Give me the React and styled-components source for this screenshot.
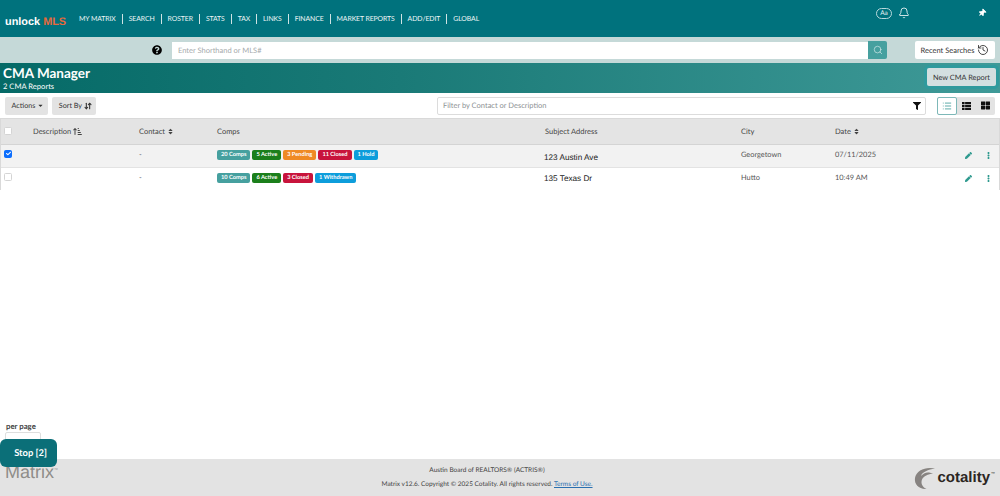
import React from 'react';
import styled, {createGlobalStyle} from 'styled-components';
import {FaQuestionCircle, FaFilter, FaPen, FaEllipsisV, FaThLarge, FaThumbtack, FaSort, FaCheck, FaCaretDown} from 'react-icons/fa';
import {FaArrowUpShortWide} from 'react-icons/fa6';
import {ArrowDownUp, Bell, History, List, Search} from 'lucide-react';

const GlobalStyle = createGlobalStyle`
    html, body {
        margin: 0;
        padding: 0;
        background: #fff;
        font-family: "Lato", "Open Sans", "Liberation Sans", sans-serif;
        text-rendering: geometricPrecision;
    }
    * {
        box-sizing: border-box;
    }
`;

const Page = styled.div`
    position: relative;
    display: flex;
    flex-direction: column;
    width: 1000px;
    height: 496px;
    overflow: hidden;
`;

const Nav = styled.div`
    height: 37px;
    flex: none;
    display: flex;
    align-items: center;
    padding: 0 14px 0 5px;
    background: #00727d;
    color: #fff;
`;
const Logo = styled.div`
    width: 74px;
    flex: none;
    font-family: "Liberation Sans", sans-serif;
    font-size: 10.9px;
    font-weight: 700;
    white-space: nowrap;
    padding-top: 6px;
    span {
        color: #e8693a;
    }
`;
const Menu = styled.div`
    display: flex;
    align-items: center;
    flex: 1;
`;
const MenuItem = styled.a`
    font-size: 6.9px;
    letter-spacing: -0.1px;
    line-height: 10px;
    color: #eef6f6;
    white-space: nowrap;
    padding: 0 6px;
    border-left: 1px solid #cfe3e4;
    &:first-child {
        border-left: none;
        padding-left: 0;
    }
`;
const NavIcons = styled.div`
    display: flex;
    align-items: center;
    margin-top: -11px;
`;
const FontPill = styled.div`
    width: 16px;
    height: 11px;
    border: 1px solid #b9d9dc;
    border-radius: 6px;
    font-size: 6.5px;
    line-height: 9px;
    text-align: center;
    color: #e5f1f2;
    margin-right: 6px;
`;
const PinWrap = styled.div`
    display: flex;
    margin-left: 68px;
    transform: rotate(45deg);
`;

const SearchBand = styled.div`
    height: 26px;
    flex: none;
    display: flex;
    align-items: center;
    padding: 0 5px 0 152px;
    background: #c5d9d8;
`;
const HelpIcon = styled(FaQuestionCircle)`
    width: 10px;
    height: 10px;
    color: #000;
    margin-right: 10px;
`;
const SearchBox = styled.div`
    width: 696px;
    height: 17px;
    display: flex;
    align-items: center;
    padding-left: 6px;
    background: #fff;
    font-size: 7.5px;
    color: #a5a9ab;
`;
const SearchButton = styled.div`
    width: 19px;
    height: 18px;
    display: flex;
    align-items: center;
    justify-content: center;
    background: #46a09f;
    border-radius: 0 2px 2px 0;
    color: #d8ecec;
`;
const RecentButton = styled.div`
    width: 80px;
    height: 18px;
    margin-left: 28px;
    display: flex;
    align-items: center;
    justify-content: center;
    gap: 3px;
    background: #fff;
    border-radius: 2px;
    font-size: 7.5px;
    color: #333;
    white-space: nowrap;
`;

const Banner = styled.div`
    height: 30px;
    flex: none;
    display: flex;
    align-items: center;
    justify-content: space-between;
    padding: 0 4px 0 3px;
    background: linear-gradient(90deg, #056a67 0%, #1a7a77 40%, #3f9a98 100%);
    color: #fff;
`;
const BannerTitle = styled.div`
    font-size: 13.5px;
    font-weight: 700;
    line-height: 16px;
`;
const BannerSub = styled.div`
    font-size: 7.6px;
    line-height: 10px;
`;
const NewButton = styled.div`
    height: 18px;
    margin-top: -2px;
    padding: 0 6px;
    display: flex;
    align-items: center;
    background: #d3dfe0;
    border-radius: 2px;
    box-shadow: 0 0 0 3px #2f9a9d;
    font-size: 7.35px;
    color: #333;
`;

const Toolbar = styled.div`
    height: 25px;
    flex: none;
    display: flex;
    align-items: center;
    padding: 0 5px;
`;
const ToolButton = styled.div`
    height: 18px;
    display: flex;
    align-items: center;
    gap: 2px;
    padding: 0 4px 0 6.5px;
    margin-right: 4px;
    background: #e3e3e3;
    border-radius: 2px;
    font-size: 7.2px;
    color: #333;
`;
const FilterBox = styled.div`
    width: 489px;
    height: 18px;
    margin-left: auto;
    display: flex;
    align-items: center;
    justify-content: space-between;
    padding: 0 4px 0 5px;
    border: 1px solid #dcdcdc;
    border-radius: 2px;
    font-size: 7.5px;
    color: #8d9194;
`;
const ViewGroup = styled.div`
    display: flex;
    height: 18px;
    margin-left: 11px;
    background: #e3e3e3;
    border-radius: 2px;
`;
const ViewButton = styled.div`
    width: ${props => props.$active ? 20 : 19}px;
    display: flex;
    align-items: center;
    justify-content: center;
    color: ${props => props.$active ? '#3d9a98' : '#111'};
    background: ${props => props.$active ? '#fff' : 'transparent'};
    border: ${props => props.$active ? '1px solid #7db8b8' : 'none'};
    border-radius: 2px;
`;

const Table = styled.div`
    flex: none;
    height: 72px;
    border: 1px solid #d9d9d9;
`;
const Row = styled.div`
    display: grid;
    grid-template-columns: 32px 106px 78px 328px 196px 94px 90px 1fr;
    align-items: center;
    height: ${props => props.$height}px;
    background: ${props => props.$bg};
    border-bottom: ${props => props.$line ? `1px solid ${props.$line}` : 'none'};
    font-size: 7.4px;
    color: #555;
`;
const HeadCell = styled.div`
    display: flex;
    align-items: center;
    gap: 2px;
    color: #444;
    font-size: 7.5px;
    white-space: nowrap;
`;
const Check = styled.div`
    width: 8px;
    height: 8px;
    margin: 0 0 ${props => props.$lift || 0}px 3px;
    display: flex;
    align-items: center;
    justify-content: center;
    border-radius: 1.5px;
    border: 1px solid ${props => props.$on ? '#0d6efd' : '#d4d4d4'};
    background: ${props => props.$on ? '#0d6efd' : '#fff'};
    color: #fff;
`;
const Cell = styled.div`
    white-space: nowrap;
    margin-top: -3px;
`;
const Badges = styled.div`
    display: flex;
    gap: 2px;
    margin-top: -2px;
`;
const Badge = styled.span`
    height: 10px;
    padding: 0 4px;
    border-radius: 2px;
    background: ${props => props.$color};
    color: #fff;
    font-size: 5.7px;
    font-weight: 700;
    line-height: 10px;
    white-space: nowrap;
`;
const Address = styled.div`
    margin-left: -1px;
    margin-top: ${props => props.$lift}px;
    padding-top: ${props => props.$drop}px;
    font-family: "Liberation Sans", sans-serif;
    font-size: 8.2px;
    color: #222;
`;
const Actions = styled.div`
    display: flex;
    justify-content: flex-end;
    align-items: center;
    gap: 13px;
    padding-right: 7px;
    margin-top: -1px;
    color: #2f9a8f;
`;

const Main = styled.div`
    flex: 1;
    display: flex;
    flex-direction: column;
    justify-content: flex-end;
    padding-left: 6px;
`;
const PerPage = styled.div`
    font-size: 7.8px;
    font-weight: 700;
    color: #444;
    line-height: 10px;
    margin-bottom: 1px;
`;
const PerPageBox = styled.div`
    width: 36px;
    height: 27px;
    margin-left: -1px;
    border: 1px solid #dedede;
    border-radius: 2px;
`;

const Footer = styled.div`
    position: relative;
    height: 37px;
    flex: none;
    display: flex;
    align-items: center;
    background: #e3e3e3;
    padding: 0 5px;
`;
const MatrixMark = styled.div`
    width: 357px;
    flex: none;
    margin-top: -10px;
    font-family: "Liberation Sans", sans-serif;
    font-size: 18px;
    color: #8f8d89;
    sup {
        font-size: 4px;
    }
`;
const FooterText = styled.div`
    width: 250px;
    margin-top: 1px;
    text-align: center;
    font-size: 6.5px;
    color: #444;
    line-height: 14px;
    a {
        color: #2a6fb0;
        text-decoration: underline;
    }
`;
const Cotality = styled.div`
    margin-left: auto;
    display: flex;
    align-items: center;
    gap: 1px;
    font-family: "Liberation Sans", sans-serif;
    font-size: 15px;
    font-weight: 700;
    color: #2b2622;
    sup {
        font-size: 4px;
        align-self: flex-start;
        margin-top: 5px;
    }
`;
const StopButton = styled.div`
    position: absolute;
    left: 0;
    top: 439px;
    width: 57px;
    height: 28px;
    display: flex;
    align-items: center;
    justify-content: center;
    padding: 1px 0 0 4px;
    background: #0b6f78;
    border-radius: 6px;
    color: #fff;
    font-size: 9.4px;
    font-weight: 700;
`;

const menu = ['MY MATRIX', 'SEARCH', 'ROSTER', 'STATS', 'TAX', 'LINKS', 'FINANCE', 'MARKET REPORTS', 'ADD/EDIT', 'GLOBAL'];

const reports = [
    {
        on: true,
        bg: '#f2f2f2',
        line: '#e3e3e3',
        height: 23,
        lift: 0,
        drop: 2,
        badges: [['20 Comps', '#46a09f'], ['5 Active', '#1b7f1b'], ['3 Pending', '#ef8a24'], ['11 Closed', '#c8143c'], ['1 Hold', '#0d9ddb']],
        address: '123 Austin Ave',
        city: 'Georgetown',
        date: '07/11/2025',
    },
    {
        on: false,
        bg: '#fff',
        height: 22,
        lift: -2,
        drop: 0,
        badges: [['10 Comps', '#46a09f'], ['6 Active', '#1b7f1b'], ['3 Closed', '#c8143c'], ['1 Withdrawn', '#0d9ddb']],
        address: '135 Texas Dr',
        city: 'Hutto',
        date: '10:49 AM',
    },
];

const TableIcon = () => (
    <svg width="9" height="8" viewBox="0 0 9 8" fill="currentColor">
        <rect x="0" y="0" width="2.6" height="2.2"/>
        <rect x="3.1" y="0" width="5.9" height="2.2"/>
        <rect x="0" y="2.9" width="2.6" height="2.2"/>
        <rect x="3.1" y="2.9" width="5.9" height="2.2"/>
        <rect x="0" y="5.8" width="2.6" height="2.2"/>
        <rect x="3.1" y="5.8" width="5.9" height="2.2"/>
    </svg>
);

const CotalityMark = () => (
    <svg width="22" height="24" viewBox="0 0 22 24">
        <defs>
            <pattern id="cotalityDots" width="1.3" height="1.3" patternUnits="userSpaceOnUse">
                <circle cx=".65" cy=".65" r=".5" fill="#3f3b38"/>
            </pattern>
        </defs>
        <path d="M21 2.5C12 .5 2.5 4 1 12C0 18 5 23.5 12.5 23C8 21 6.5 17 8 13.5C9.5 10 14 8 19 7.5L15 6.5C12 6 9 8 7 10C8 6 14 3.5 21 2.5Z" fill="#b5b3b0"/>
        <path d="M21 2.5C12 .5 2.5 4 1 12C0 18 5 23.5 12.5 23C8 21 6.5 17 8 13.5C9.5 10 14 8 19 7.5L15 6.5C12 6 9 8 7 10C8 6 14 3.5 21 2.5Z" fill="url(#cotalityDots)"/>
    </svg>
);

const App = () => {
    return (
        <Page>
            <GlobalStyle/>
            <Nav>
                <Logo>unlock <span>MLS</span></Logo>
                <Menu>
                    {menu.map(item => <MenuItem key={item}>{item}</MenuItem>)}
                </Menu>
                <NavIcons>
                    <FontPill>Aa</FontPill>
                    <Bell size={12} strokeWidth={1.6}/>
                    <PinWrap><FaThumbtack size={8}/></PinWrap>
                </NavIcons>
            </Nav>
            <SearchBand>
                <HelpIcon/>
                <SearchBox>Enter Shorthand or MLS#</SearchBox>
                <SearchButton><Search size={10} strokeWidth={1.6}/></SearchButton>
                <RecentButton>Recent Searches <History size={12} strokeWidth={1.8}/></RecentButton>
            </SearchBand>
            <Banner>
                <div>
                    <BannerTitle>CMA Manager</BannerTitle>
                    <BannerSub>2 CMA Reports</BannerSub>
                </div>
                <NewButton>New CMA Report</NewButton>
            </Banner>
            <Toolbar>
                <ToolButton>Actions <FaCaretDown size={7}/></ToolButton>
                <ToolButton>Sort By <ArrowDownUp size={8} strokeWidth={3.2}/></ToolButton>
                <FilterBox>
                    Filter by Contact or Description
                    <FaFilter size={8} color="#111"/>
                </FilterBox>
                <ViewGroup>
                    <ViewButton $active><List size={10}/></ViewButton>
                    <ViewButton><TableIcon/></ViewButton>
                    <ViewButton><FaThLarge size={9}/></ViewButton>
                </ViewGroup>
            </Toolbar>
            <Table>
                <Row $height={26} $bg="#e4e4e4" $line="#d4d4d4">
                    <Check $lift={1}/>
                    <HeadCell>Description <FaArrowUpShortWide size={9}/></HeadCell>
                    <HeadCell>Contact <FaSort size={7}/></HeadCell>
                    <HeadCell>Comps</HeadCell>
                    <HeadCell>Subject Address</HeadCell>
                    <HeadCell>City</HeadCell>
                    <HeadCell>Date <FaSort size={7}/></HeadCell>
                </Row>
                {reports.map(report => (
                    <Row key={report.address} $height={report.height} $bg={report.bg} $line={report.line}>
                        <Check $on={report.on} $lift={5}>{report.on && <FaCheck size={5}/>}</Check>
                        <div/>
                        <Cell>-</Cell>
                        <Badges>
                            {report.badges.map(([label, color]) => <Badge key={label} $color={color}>{label}</Badge>)}
                        </Badges>
                        <Address $lift={report.lift} $drop={report.drop}>{report.address}</Address>
                        <Cell>{report.city}</Cell>
                        <Cell>{report.date}</Cell>
                        <Actions>
                            <FaPen size={7}/>
                            <FaEllipsisV size={7}/>
                        </Actions>
                    </Row>
                ))}
            </Table>
            <Main>
                <PerPage>per page</PerPage>
                <PerPageBox/>
            </Main>
            <Footer>
                <MatrixMark>Matrix<sup>™</sup></MatrixMark>
                <FooterText>
                    <div>Austin Board of REALTORS® (ACTRIS®)</div>
                    <div>Matrix v12.6. Copyright © 2025 Cotality. All rights reserved. <a>Terms of Use.</a></div>
                </FooterText>
                <Cotality><CotalityMark/>cotality<sup>™</sup></Cotality>
            </Footer>
            <StopButton>Stop [2]</StopButton>
        </Page>
    );
};

export default App;
